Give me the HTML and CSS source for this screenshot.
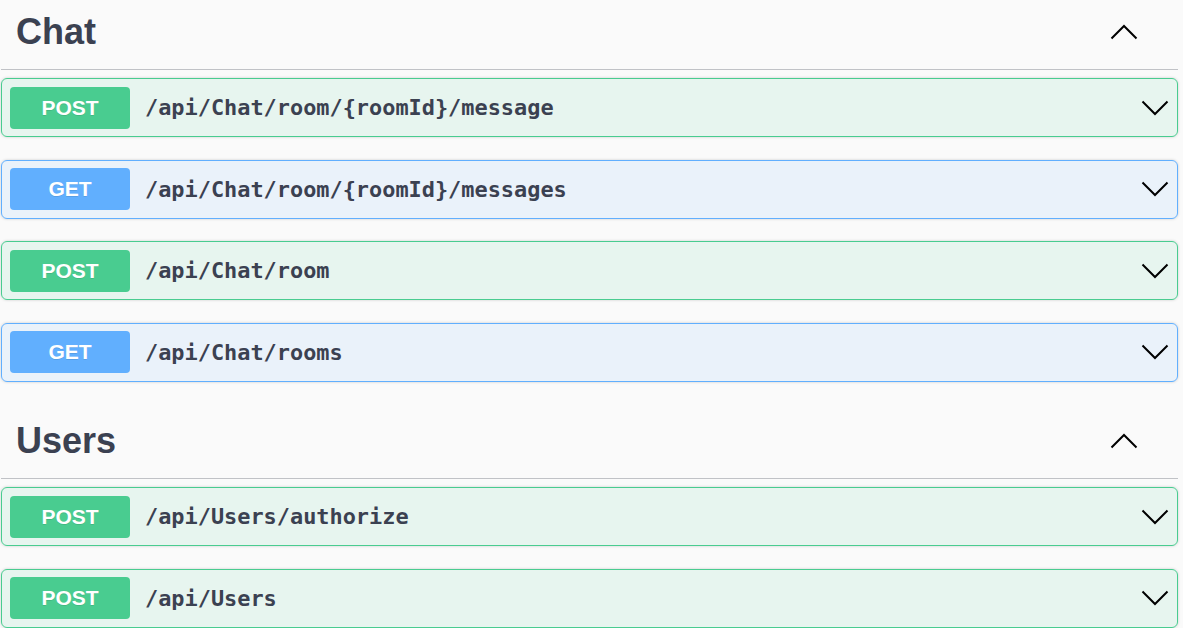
FILE: index.html
```html
<!DOCTYPE html>
<html lang="en">
<head>
<meta charset="utf-8">
<title>Swagger</title>
<link rel="stylesheet" href="styles.css">
</head>
<body>
<div class="wrapper">
  <section class="tag-section">
    <div class="tag-header">
      <h3 class="tag-title">Chat</h3>
      <svg class="chev-up" width="28" height="16" viewBox="0 0 28 16"><polyline points="1.5,14.5 14,2 26.5,14.5" fill="none" stroke="#000" stroke-width="2"/></svg>
    </div>
    <div class="opblock post">
      <span class="method">POST</span>
      <span class="path">/api/Chat/room/{roomId}/message</span>
      <svg class="chev-down" width="28" height="16" viewBox="0 0 28 16"><polyline points="1.5,1.5 14,14 26.5,1.5" fill="none" stroke="#000" stroke-width="2"/></svg>
    </div>
    <div class="opblock get">
      <span class="method">GET</span>
      <span class="path">/api/Chat/room/{roomId}/messages</span>
      <svg class="chev-down" width="28" height="16" viewBox="0 0 28 16"><polyline points="1.5,1.5 14,14 26.5,1.5" fill="none" stroke="#000" stroke-width="2"/></svg>
    </div>
    <div class="opblock post">
      <span class="method">POST</span>
      <span class="path">/api/Chat/room</span>
      <svg class="chev-down" width="28" height="16" viewBox="0 0 28 16"><polyline points="1.5,1.5 14,14 26.5,1.5" fill="none" stroke="#000" stroke-width="2"/></svg>
    </div>
    <div class="opblock get">
      <span class="method">GET</span>
      <span class="path">/api/Chat/rooms</span>
      <svg class="chev-down" width="28" height="16" viewBox="0 0 28 16"><polyline points="1.5,1.5 14,14 26.5,1.5" fill="none" stroke="#000" stroke-width="2"/></svg>
    </div>
  </section>
  <section class="tag-section">
    <div class="tag-header">
      <h3 class="tag-title">Users</h3>
      <svg class="chev-up" width="28" height="16" viewBox="0 0 28 16"><polyline points="1.5,14.5 14,2 26.5,14.5" fill="none" stroke="#000" stroke-width="2"/></svg>
    </div>
    <div class="opblock post">
      <span class="method">POST</span>
      <span class="path">/api/Users/authorize</span>
      <svg class="chev-down" width="28" height="16" viewBox="0 0 28 16"><polyline points="1.5,1.5 14,14 26.5,1.5" fill="none" stroke="#000" stroke-width="2"/></svg>
    </div>
    <div class="opblock post">
      <span class="method">POST</span>
      <span class="path">/api/Users</span>
      <svg class="chev-down" width="28" height="16" viewBox="0 0 28 16"><polyline points="1.5,1.5 14,14 26.5,1.5" fill="none" stroke="#000" stroke-width="2"/></svg>
    </div>
  </section>
</div>
</body>
</html>
```

FILE: styles.css
```css
html, body {
  margin: 0;
  padding: 0;
  background: #fafafa;
  overflow: hidden;
}

.wrapper {
  padding: 0 5px 0 1px;
  margin-top: -5px;
}

.tag-header {
  display: flex;
  align-items: center;
  justify-content: space-between;
  height: 74px;
  border-bottom: 1px solid rgba(59, 65, 81, 0.3);
  padding: 0 40px 0 15px;
  margin-bottom: 8px;
}

.tag-title {
  margin: 0;
  font-family: "Liberation Sans", Arial, sans-serif;
  font-weight: bold;
  font-size: 36px;
  color: #3b4151;
}

.chev-up, .chev-down {
  display: block;
  flex: none;
}

.opblock {
  display: flex;
  align-items: center;
  height: 57px;
  padding: 0 8px;
  border: 1px solid;
  border-radius: 6px;
  box-shadow: 0 0 3px rgba(0, 0, 0, 0.19);
  margin-bottom: 22.5px;
}

.opblock.post {
  background: rgba(73, 204, 144, 0.1);
  border-color: #49cc90;
}

.opblock.get {
  background: rgba(97, 175, 254, 0.1);
  border-color: #61affe;
}

.method {
  flex: none;
  width: 120px;
  height: 42px;
  display: flex;
  align-items: center;
  justify-content: center;
  border-radius: 4px;
  color: #fff;
  font-family: "Liberation Sans", Arial, sans-serif;
  font-weight: bold;
  font-size: 21px;
  text-shadow: 0 1px 0 rgba(0, 0, 0, 0.1);
}

.post .method { background: #49cc90; }
.get .method { background: #61affe; }

.path {
  flex: 1;
  padding-left: 15px;
  font-family: "DejaVu Sans Mono", "Liberation Mono", monospace;
  font-weight: bold;
  font-size: 21.9px;
  color: #3b4151;
}
```
